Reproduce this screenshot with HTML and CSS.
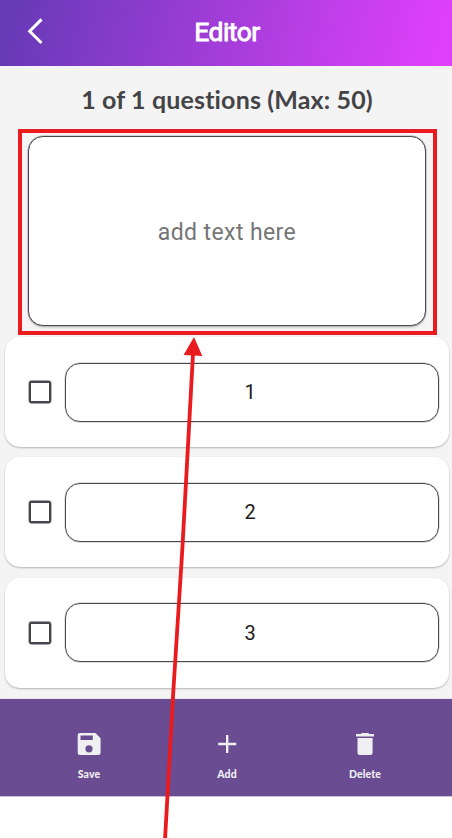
FILE: index.html
```html
<!DOCTYPE html>
<html lang="en">
<head>
<meta charset="utf-8">
<title>Editor</title>
<link rel="stylesheet" href="styles.css">
</head>
<body>
<div class="screen">
  <header class="topbar">
    <svg class="back" width="18" height="28" viewBox="0 0 18 28"><path d="M15.5 2.4 3.7 14.2 15.5 26" fill="none" stroke="#fff" stroke-width="3"/></svg>
    <h1 class="title">Editor</h1>
  </header>
  <main class="content">
    <p class="count">1 of 1 questions (Max: 50)</p>
    <section class="highlight"><div class="question">add text here</div></section>
    <div class="answers">
      <div class="answer"><span class="check"></span><div class="field">1</div></div>
      <div class="answer"><span class="check"></span><div class="field">2</div></div>
      <div class="answer"><span class="check"></span><div class="field">3</div></div>
    </div>
  </main>
  <nav class="actions">
    <div class="action">
      <svg width="24" height="24" viewBox="0 0 24 24"><path fill="#f0eff1" fill-rule="evenodd" d="M3 1H18.5L23.6 6.2V20.8Q23.6 23 21.4 23H3Q.7 23 .7 20.8V3.2Q.7 1 3 1ZM3.5 3.5V8H15.8V3.5ZM12 13.2a3.6 3.6 0 1 0 0 7.2 3.6 3.6 0 0 0 0-7.2Z"/></svg>
      <span>Save</span>
    </div>
    <div class="action">
      <svg width="24" height="24" viewBox="0 0 24 24"><path fill="#f0eff1" d="M11 3h2.4v7.8H21.2v2.4h-7.8V21H11v-7.8H3.2v-2.4H11Z"/></svg>
      <span>Add</span>
    </div>
    <div class="action">
      <svg width="24" height="24" viewBox="0 0 24 24"><path fill="#f0eff1" d="M3 2H7.8L8.8 1H15.2L16.2 2H21V4.6H3ZM4.5 5.9H19.6V20.8Q19.6 23 17.4 23H6.7Q4.5 23 4.5 20.8Z"/></svg>
      <span>Delete</span>
    </div>
  </nav>
  <svg class="arrow" width="452" height="838" viewBox="0 0 452 838"><path d="M193 354 182.4 548 173.4 690 165 840" fill="none" stroke="#e91b1e" stroke-width="3.8"/><path d="M194 337 202.3 356 183.6 355Z" fill="#e91b1e"/></svg>
</div>
</body>
</html>
```
FILE: styles.css
```css
* { box-sizing: border-box; }
body { margin: 0; background: #fff; font-family: Roboto, sans-serif; }
.screen { position: relative; width: 452px; height: 838px; overflow: hidden; }
.topbar {
  display: grid;
  grid-template-columns: 52px 1fr 50px;
  align-items: center;
  height: 66px;
  background: linear-gradient(104deg, #673ab7 3%, #e040fb 97%);
}
.back { margin: -5px 0 0 26px; }
.title {
  margin: -3px 0 0;
  text-align: center;
  color: #fff;
  font-size: 26.5px;
  font-weight: 400;
  line-height: 32px;
  letter-spacing: -0.5px;
  -webkit-text-stroke: 0.9px #fff;
}
.content { height: 633px; background: #f4f4f4; border-bottom: 1px solid #e6e4e9; }
.count {
  margin: 0;
  padding: 17px 0 14px 2px;
  text-align: center;
  color: #444446;
  font: 700 25px/32px Lato, sans-serif;
  letter-spacing: 0.15px;
}
.highlight {
  width: 419px;
  height: 206px;
  margin-left: 18px;
  padding: 3px 6px;
  border: 4px solid #e91b1e;
}
.question {
  display: flex;
  align-items: center;
  justify-content: center;
  width: 398px;
  height: 190px;
  padding-top: 2px;
  border: 1px solid #4a4952;
  border-radius: 15px;
  background: #fff;
  box-shadow: 0 0 0 0.5px #4a495266, 0 2px 2px #0002;
  color: #757575;
  font-size: 23px;
  letter-spacing: 0.4px;
}
.answers {
  display: flex;
  flex-direction: column;
  gap: 10.4px;
  margin: 2px 3px 0 5px;
}
.answer {
  display: flex;
  align-items: center;
  gap: 14px;
  height: 110px;
  padding: 0 10px 0 24px;
  border-radius: 15px;
  background: #fff;
  box-shadow: 0 1px 2px #0004;
}
.check {
  width: 22px;
  height: 22px;
  flex: none;
  border: 2px solid #49454f;
  border-radius: 2px;
  box-shadow: 0 0 0 0.4px #49454f;
}
.field {
  display: flex;
  align-items: center;
  justify-content: center;
  flex: 1;
  height: 59px;
  padding-right: 4px;
  border: 1px solid #4a4952;
  border-radius: 15px;
  box-shadow: 0 0 0 0.4px #4a495266;
  color: #1d1b20;
  font-size: 20px;
}
.actions {
  display: grid;
  grid-template-columns: repeat(3, 1fr);
  height: 98px;
  padding: 33px 18px 0 20px;
  background: #6a4c93;
  border-bottom: 1px solid #c8bed6;
}
.action {
  display: flex;
  flex-direction: column;
  align-items: center;
  gap: 11px;
  color: #f0eff1;
  font: 900 10.5px/14px Lato, sans-serif;
  letter-spacing: 0.15px;
}
.arrow { position: absolute; top: 0; left: 0; pointer-events: none; }
```
